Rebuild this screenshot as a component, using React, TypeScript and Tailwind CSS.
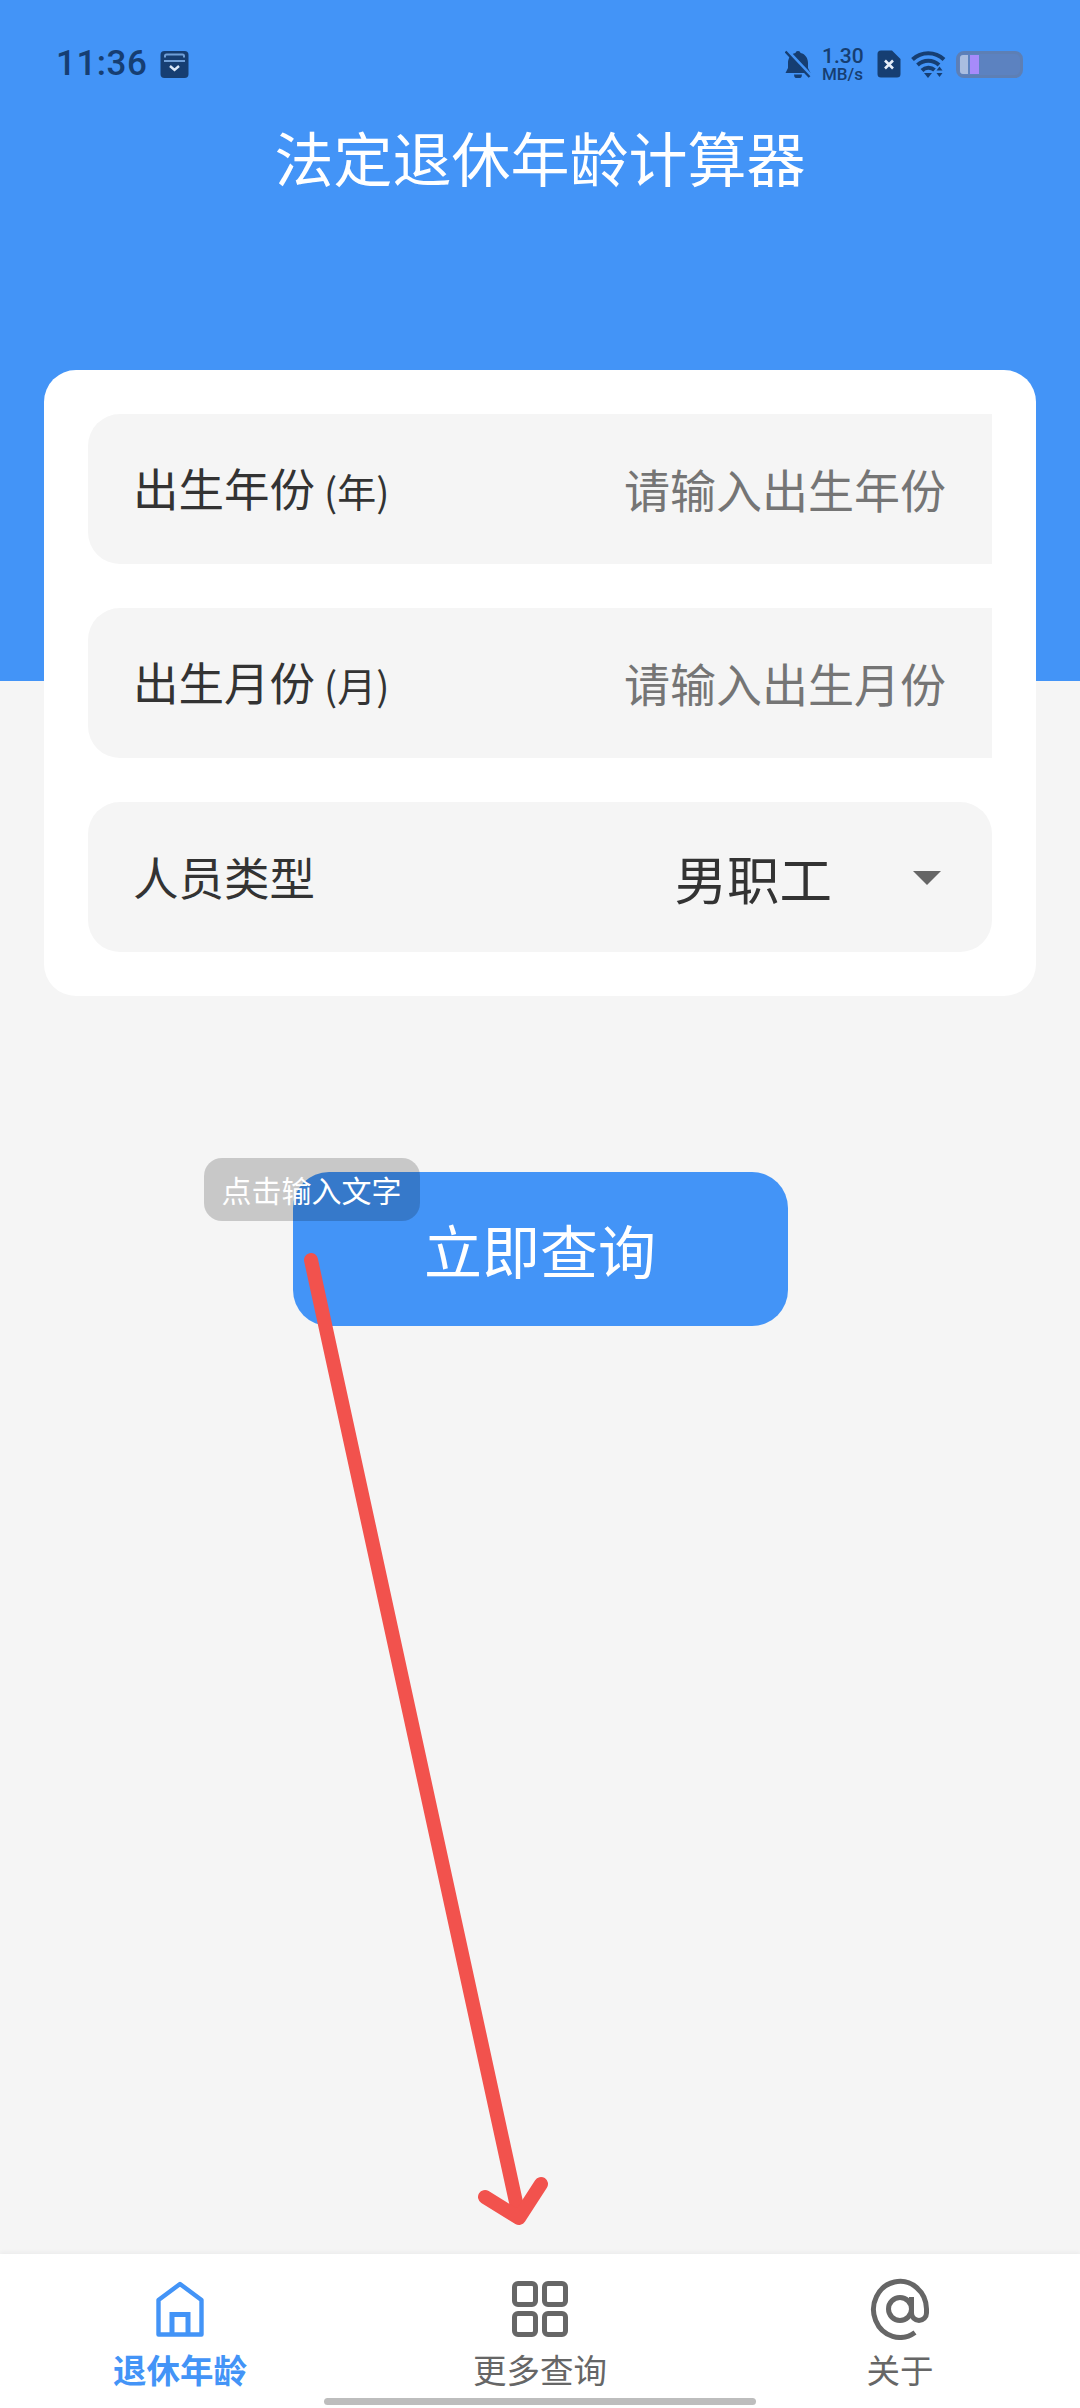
import React from 'react';

const StatusBar: React.FC = () => (
  <div className="flex h-[125px] shrink-0 items-start justify-between pl-[56px] pr-[57px] pt-[48px] text-[#163e72]">
    <div className="flex items-center">
      <span className="font-['Roboto',sans-serif] text-[35px] leading-[32px] font-medium tracking-[0.5px]">11:36</span>
      <svg className="ml-[13px]" width="29" height="29" viewBox="0 0 29 29">
        <rect x="0.5" y="1" width="28" height="27" rx="4" fill="#163e72" />
        <path d="M5 7.5 V6 a1.5 1.5 0 0 1 1.5 -1.5 H22.5 A1.5 1.5 0 0 1 24 6 V7.5" fill="none" stroke="#6f9fd8" strokeWidth="2" />
        <path d="M4 11 H25" stroke="#6f9fd8" strokeWidth="2" />
        <path d="M10 16 L14.5 20 L19 16" fill="none" stroke="#dbe8f8" strokeWidth="2.4" />
      </svg>
    </div>
    <div className="-mt-[2px] flex items-center">
      <svg width="26" height="28" viewBox="0 0 26 28">
        <path d="M13 1 a2.6 2.6 0 0 1 2.6 2 C20.5 4 23 8.5 23 13 V18 L25.5 23 H0.5 L3 18 V13 C3 8.5 5.5 4 10.4 3 A2.6 2.6 0 0 1 13 1 Z M9 24.5 H17 A4 4 0 0 1 9 24.5 Z" fill="#163e72" />
        <path d="M3 1.5 L26 26" stroke="#4394f7" strokeWidth="3.6" />
        <path d="M0.5 1.5 L24.5 27" stroke="#163e72" strokeWidth="2.4" />
      </svg>
      <div className="ml-[11px] flex w-[45px] flex-col items-start font-['Roboto',sans-serif] font-medium">
        <span className="text-[21px] leading-[21px]">1.30</span>
        <span className="text-[17px] leading-[15px]">MB/s</span>
      </div>
      <svg className="ml-[10px]" width="24" height="28" viewBox="0 0 24 28">
        <path d="M4 0.5 H15 L23.5 9 V24 a3.5 3.5 0 0 1 -3.5 3.5 H4 A3.5 3.5 0 0 1 0.5 24 V4 A3.5 3.5 0 0 1 4 0.5 Z" fill="#163e72" />
        <path d="M8 10.5 L16 18.5 M16 10.5 L8 18.5" stroke="#e6eef9" strokeWidth="2.6" />
      </svg>
      <svg className="ml-[10px]" width="35" height="28" viewBox="0 0 35 28">
        <path d="M1.5 9.5 A23 23 0 0 1 33 9.5" fill="none" stroke="#163e72" strokeWidth="4" />
        <path d="M6.5 15 A16 16 0 0 1 28 15" fill="none" stroke="#163e72" strokeWidth="4" />
        <path d="M11 20.5 A9 9 0 0 1 23.5 20" fill="none" stroke="#163e72" strokeWidth="4" />
        <path d="M13 23 H21 L17 28 Z" fill="#163e72" />
        <path d="M28.5 16.5 L31.5 20.5 H25.5 Z M25.5 23 H31.5 L28.5 27 Z" fill="#163e72" />
      </svg>
      <div className="relative ml-[10px] h-[27px] w-[67px] overflow-hidden rounded-[8px] border-[3px] border-[#5d7fb5] bg-[#5c82c0]">
        <div className="absolute left-[1px] top-[1px] h-[19px] w-[8px] rounded-l-[3px] bg-[#a9bde0]" />
        <div className="absolute left-[11px] top-[1px] h-[19px] w-[9px] bg-[#a78bfa]" />
      </div>
    </div>
  </div>
);

const FieldRow: React.FC<{ label: string; unit: string; placeholder: string }> = ({ label, unit, placeholder }) => (
  <div className="flex h-[150px] items-center justify-between rounded-l-[32px] bg-[#f5f5f5] pb-[2px] pl-[45px] pr-[46px]">
    <div className="flex items-baseline text-[#333333]">
      <span className="text-[45.5px] leading-none">{label}</span>
      <span className="ml-[9px] text-[39px] leading-none">{unit}</span>
    </div>
    <span className="text-[46px] leading-none text-[#757575]">{placeholder}</span>
  </div>
);

const NavItem: React.FC<{ label: string; active?: boolean; children: React.ReactNode }> = ({ label, active, children }) => (
  <div className="flex w-[360px] flex-col items-center">
    <div className="flex h-[62px] items-center justify-center">{children}</div>
    <span className={`mt-[11px] text-[33.5px] leading-[36px] ${active ? 'font-bold text-[#4394f7]' : 'text-[#666666]'}`}>{label}</span>
  </div>
);

export default function App() {
  return (
    <div className="relative flex h-[2408px] w-[1080px] flex-col overflow-hidden bg-[#f5f5f5] font-['Noto_Sans_CJK_SC','Roboto',sans-serif]">
      <header className="h-[681px] shrink-0 bg-[#4394f7]">
        <StatusBar />
        <h1 className="text-center text-[59px] leading-[64px] font-normal text-white">法定退休年龄计算器</h1>
      </header>

      <main className="-mt-[311px] flex flex-1 flex-col px-[44px]">
        <section className="flex flex-col gap-[44px] rounded-[32px] bg-white p-[44px]">
          <FieldRow label="出生年份" unit="(年)" placeholder="请输入出生年份" />
          <FieldRow label="出生月份" unit="(月)" placeholder="请输入出生月份" />
          <div className="flex h-[150px] items-center rounded-[32px] bg-[#f5f5f5] pl-[45px] pr-[51px]">
            <span className="text-[45.5px] leading-none text-[#333333]">人员类型</span>
            <span className="ml-auto text-[52.5px] leading-none text-[#333333]">男职工</span>
            <span className="ml-[81px] mt-[1px] h-0 w-0 border-x-[14px] border-t-[14px] border-x-transparent border-t-[#666666]" />
          </div>
        </section>

        <div className="relative mx-auto mt-[176px] flex h-[154px] w-[495px] items-center justify-center rounded-[36px] bg-[#4394f7] text-[58px] text-white">
          立即查询
          <div className="absolute -left-[89px] -top-[14px] flex h-[63px] w-[216px] items-center justify-center rounded-[18px] bg-black/[0.18] pb-[2px] text-[30px] leading-none text-white">
            点击输入文字
          </div>
        </div>
      </main>

      <nav className="relative flex h-[154px] shrink-0 items-start bg-white pt-[24px] shadow-[0_-2px_4px_rgba(0,0,0,0.04)]">
        <NavItem label="退休年龄" active>
          <svg width="48" height="56" viewBox="0 0 48 56" fill="none" stroke="#4394f7" strokeWidth="4.4">
            <path d="M24 3 L45.5 19 V53.5 H2.5 V19 Z" strokeLinejoin="round" />
            <path d="M16 53 V33.5 H32 V53" strokeWidth="5" />
          </svg>
        </NavItem>
        <NavItem label="更多查询">
          <svg width="56" height="56" viewBox="0 0 56 56" fill="none" stroke="#666666" strokeWidth="5">
            <rect x="2.5" y="2.5" width="21" height="21" rx="3.5" />
            <rect x="32.5" y="2.5" width="21" height="21" rx="3.5" />
            <rect x="2.5" y="32.5" width="21" height="21" rx="3.5" />
            <rect x="32.5" y="32.5" width="21" height="21" rx="3.5" />
          </svg>
        </NavItem>
        <NavItem label="关于">
          <svg width="62" height="62" viewBox="0 0 62 62" fill="none" stroke="#666666" strokeWidth="5">
            <circle cx="31" cy="31" r="11.5" />
            <path d="M42.5 19 V35 a7.5 7.5 0 0 0 15 0 V31 A26.5 28 0 1 0 46 54.5" />
          </svg>
        </NavItem>
        <div className="absolute bottom-[3px] left-[324px] h-[7px] w-[432px] rounded-full bg-[#bdbdbd]" />
      </nav>

      {/* red hand-drawn annotation, sits over the whole page */}
      <svg className="pointer-events-none absolute left-0 top-0" width="1080" height="2408" viewBox="0 0 1080 2408" fill="none" stroke="#f2524d" strokeWidth="14" strokeLinecap="round" strokeLinejoin="round">
        <path d="M311 1260 L519 2216" />
        <path d="M485 2197 L519 2218 L541 2184" />
      </svg>
    </div>
  );
}
